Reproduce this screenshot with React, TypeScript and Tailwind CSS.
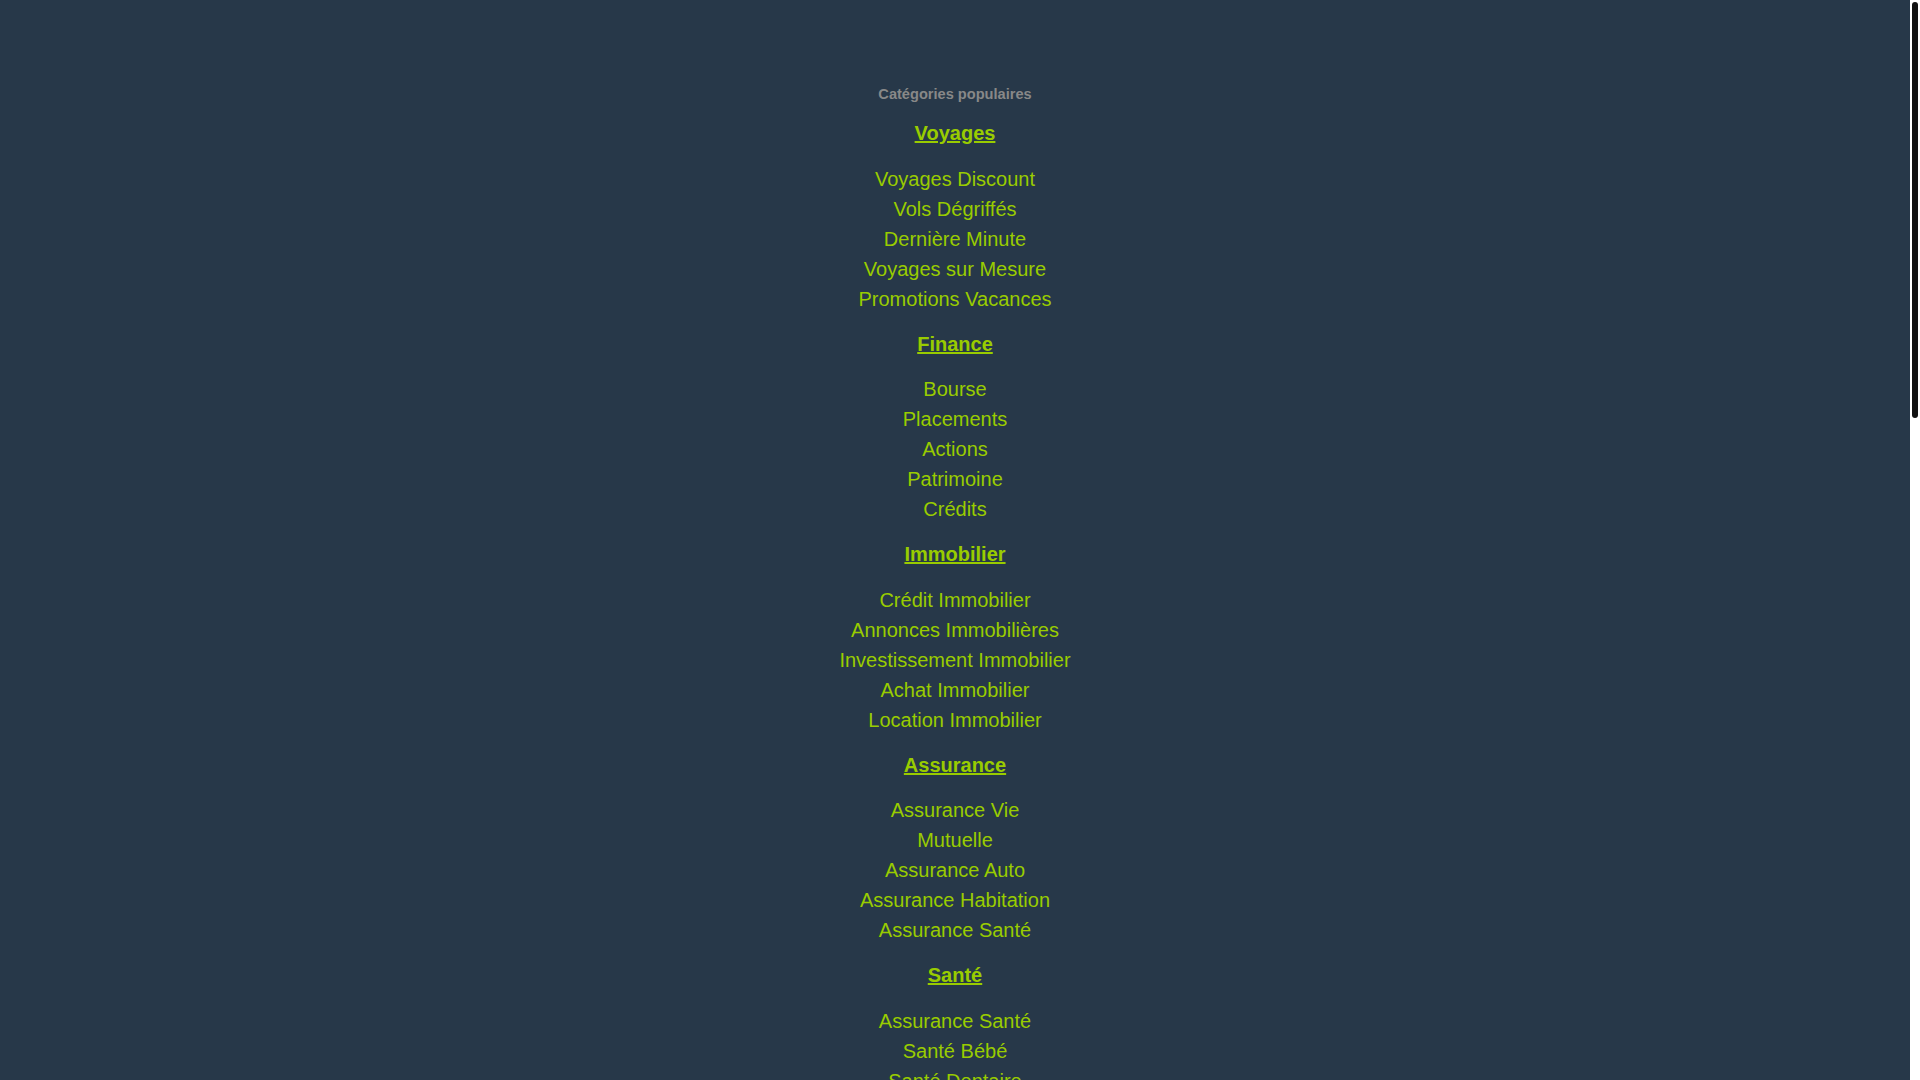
import React from "react";

const sections: { title: string; items: string[] }[] = [
  { title: "Voyages", items: ["Voyages Discount", "Vols Dégriffés", "Dernière Minute", "Voyages sur Mesure", "Promotions Vacances"] },
  { title: "Finance", items: ["Bourse", "Placements", "Actions", "Patrimoine", "Crédits"] },
  { title: "Immobilier", items: ["Crédit Immobilier", "Annonces Immobilières", "Investissement Immobilier", "Achat Immobilier", "Location Immobilier"] },
  { title: "Assurance", items: ["Assurance Vie", "Mutuelle", "Assurance Auto", "Assurance Habitation", "Assurance Santé"] },
  { title: "Santé", items: ["Assurance Santé", "Santé Bébé", "Santé Dentaire", "Médecine Douce", "Bien-être"] },
  { title: "Automobile", items: ["Voitures Neuves", "Voitures d'Occasion", "Location Voiture", "Crédit Auto", "Pièces Auto"] },
  { title: "Emploi", items: ["Offres d'Emploi", "Intérim", "Recrutement", "CV", "Salaires"] },
  { title: "Formation", items: ["Formation Professionnelle", "Cours en Ligne", "Langues", "Diplômes", "Écoles"] },
];

export default function App() {
  return (
    <div
      className="flex h-screen w-full overflow-hidden bg-white"
      style={{ fontFamily: '"Liberation Sans", Arial, sans-serif' }}
    >
      <main className="flex-1 overflow-hidden bg-[#273849]">
        <div className="flex flex-col items-center pt-[84px] pb-[140px] text-center">
          <div className="mb-[13px] text-[14.6px] font-bold leading-[20px] text-[#888888]">Catégories populaires</div>
          <div className="flex flex-col items-center gap-[14px]">
            {sections.map((s) => (
              <div key={s.title} className="flex flex-col items-center">
                <a href="#" className="text-[20px] font-bold leading-[32px] text-[#99cc00] underline">
                  {s.title}
                </a>
                <ul className="mt-[14.6px] flex flex-col items-center">
                  {s.items.map((it, i) => (
                    <li key={i} className="text-[20px] leading-[30px]">
                      <a href="#" className="text-[#99cc00] no-underline">
                        {it}
                      </a>
                    </li>
                  ))}
                </ul>
              </div>
            ))}
          </div>
        </div>
      </main>
      <div className="flex w-[10px] shrink-0 justify-center bg-white pt-[2px]">
        <div className="h-[416px] w-[6px] rounded-[3px] bg-[#111111]" />
      </div>
    </div>
  );
}
